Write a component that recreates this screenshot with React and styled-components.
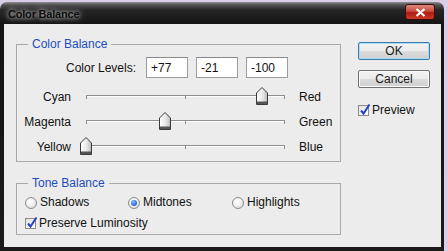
import React from "react";
import styled, { createGlobalStyle } from "styled-components";

const Global = createGlobalStyle`
  html, body { margin: 0; padding: 0; background: #dacde6; }
  body {
    width: 447px; height: 251px; overflow: hidden;
    font-family: "Liberation Sans", Arial, sans-serif;
    font-size: 12px; color: #111;
  }
  #root { padding-top: 2px; }
`;

const Window = styled.div`
  box-sizing: border-box;
  width: 444px;
  height: 249px;
  display: flex;
  flex-direction: column;
  padding: 0 3px 4px 4px;
  border-radius: 7px 7px 0 0;
  background: linear-gradient(to bottom, #8e8e8e 0px, #505050 3px, #262626 8px, #141414 22px, #1a1a1a 100%);
`;

const TitleBar = styled.div`
  height: 22px;
  display: flex;
  align-items: flex-start;
  justify-content: space-between;
  padding: 0 6px 0 4px;
`;

const Title = styled.div`
  margin-top: 6px;
  font-size: 11px;
  font-weight: bold;
  color: #0c0c0c;
  letter-spacing: -0.2px;
  text-shadow: 0 0 4px rgba(230, 230, 230, 0.9), 0 0 8px rgba(200, 200, 200, 0.6);
`;

const CloseButton = styled.div`
  margin-top: 2px;
  width: 30px;
  height: 16px;
  box-sizing: border-box;
  border: 1px solid #3a0a0a;
  border-radius: 3px;
  background: linear-gradient(to bottom, #e08a80 0%, #c84a3c 45%, #b01c10 55%, #c83a2a 100%);
  display: flex;
  align-items: center;
  justify-content: center;
`;

const Content = styled.div`
  flex: 1;
  background: #ececec;
  display: grid;
  grid-template-columns: 325px 72px;
  column-gap: 17px;
  align-items: start;
  padding: 18px 0 0 12px;
`;

const LeftColumn = styled.div`
  display: flex;
  flex-direction: column;
  gap: 21px;
  margin-top: 2px;
`;

const Group = styled.div`
  position: relative;
  border: 1px solid #a9a9a9;
  padding: ${(p) => p.$pad};
`;

const Legend = styled.span`
  position: absolute;
  top: -8px;
  left: 11px;
  padding: 0 4px;
  line-height: 14px;
  background: #ececec;
  color: #1d4cc0;
`;

const LevelsRow = styled.div`
  display: flex;
  align-items: center;
  height: 21px;
  margin-bottom: 7px;
`;

const LevelsLabel = styled.span`
  width: 119px;
  text-align: right;
  margin-right: 10px;
`;

const LevelBox = styled.input`
  box-sizing: border-box;
  width: 42px;
  height: 21px;
  margin-right: 8px;
  padding: 0 0 0 4px;
  border: 1px solid #9c9c9c;
  border-top-color: #8a8a8a;
  background: #fff;
  font: inherit;
  color: #111;
  outline: none;
`;

const SliderRow = styled.div`
  display: flex;
  align-items: flex-start;
  height: 25px;
  line-height: 25px;
`;

const SideLabel = styled.span`
  width: 54px;
  text-align: right;
`;

const Track = styled.div`
  position: relative;
  width: 199px;
  height: 25px;
  margin: 0 14px 0 15px;
  svg.line { display: block; }
`;

const Thumb = styled.svg`
  position: absolute;
  top: 2px;
  width: 12px;
  height: 18px;
`;

const RowsBlock = styled.div`
  display: flex;
  flex-direction: column;
`;

const RadioRow = styled.div`
  display: grid;
  grid-template-columns: 103px 104px auto;
  height: 13px;
  align-items: center;
  margin-bottom: 8px;
`;

const Option = styled.label`
  display: flex;
  align-items: center;
  gap: 3px;
  line-height: 13px;
`;

const RadioCircle = styled.span`
  box-sizing: border-box;
  width: 12px;
  height: 12px;
  border-radius: 50%;
  border: 1px solid #8b8b8b;
  background: radial-gradient(circle at 40% 35%, #ffffff 0%, #f0f0f0 45%, #cfcfcf 100%);
  display: flex;
  align-items: center;
  justify-content: center;
  &::after {
    content: "";
    display: ${(p) => (p.$on ? "block" : "none")};
    width: 6px;
    height: 6px;
    border-radius: 50%;
    background: radial-gradient(circle at 40% 35%, #8fc0ff 0%, #2d6fe0 60%, #1a4bb0 100%);
  }
`;

const CheckWrap = styled.span`
  position: relative;
  box-sizing: border-box;
  width: 11px;
  height: 11px;
  border: 1px solid #8b8b8b;
  background: linear-gradient(135deg, #e2e2e2, #ffffff);
  flex: none;
  svg { position: absolute; left: 0px; top: -3px; }
`;

const RightColumn = styled.div`
  display: flex;
  flex-direction: column;
  gap: 10px;
`;

const Button = styled.div`
  box-sizing: border-box;
  height: 18px;
  display: flex;
  align-items: center;
  justify-content: center;
  border: 1px solid ${(p) => (p.$default ? "#3d7bad" : "#707070")};
  border-radius: 2px;
  box-shadow: inset 0 0 0 1px ${(p) => (p.$default ? "#a8dcf4" : "#fbfbfb")};
  background: linear-gradient(to bottom, #f3f3f3 0%, #ebebeb 48%, #dcdcdc 52%, #cfcfcf 100%);
  color: #1a1a1a;
`;

const PreviewRow = styled.label`
  display: flex;
  align-items: center;
  gap: 3px;
  margin-top: 5px;
  line-height: 14px;
`;

const Check = () => (
  <CheckWrap>
    <svg width="13" height="13" viewBox="0 0 13 13">
      <path d="M2 7.5 L4.5 10.5 L10.5 1.5" fill="none" stroke="#2444c4" strokeWidth="2" strokeLinejoin="miter" />
    </svg>
  </CheckWrap>
);

const TrackLine = () => (
  <svg className="line" width="199" height="25" viewBox="0 0 199 25">
    <line x1="0" y1="10.5" x2="199" y2="10.5" stroke="#8f8f8f" />
    <line x1="0" y1="11.5" x2="199" y2="11.5" stroke="#ffffff" />
    <line x1="0.5" y1="10" x2="0.5" y2="14" stroke="#8f8f8f" />
    <line x1="99.5" y1="10" x2="99.5" y2="14" stroke="#8f8f8f" />
    <line x1="198.5" y1="10" x2="198.5" y2="14" stroke="#8f8f8f" />
  </svg>
);

const SliderThumb = ({ value }) => {
  const left = ((value + 100) / 200) * 199 - 6;
  return (
    <Thumb viewBox="0 0 12 18" style={{ left }}>
      <defs>
        <linearGradient id="tg" x1="0" y1="0" x2="1" y2="0">
          <stop offset="0" stopColor="#ffffff" />
          <stop offset="0.6" stopColor="#e6e6e6" />
          <stop offset="1" stopColor="#b8b8b8" />
        </linearGradient>
      </defs>
      <path d="M6 0.5 L11.5 6 L11.5 17.5 L0.5 17.5 L0.5 6 Z" fill="url(#tg)" stroke="#3a3a3a" />
      <rect x="1" y="14.5" width="10" height="2.5" fill="#555" />
    </Thumb>
  );
};

const sliders = [
  { left: "Cyan", right: "Red", value: 77 },
  { left: "Magenta", right: "Green", value: -21 },
  { left: "Yellow", right: "Blue", value: -100 },
];

export default function App() {
  return (
    <>
      <Global />
      <Window>
        <TitleBar>
          <Title>Color Balance</Title>
          <CloseButton>
            <svg width="11" height="9" viewBox="0 0 11 9">
              <path d="M1.5 1 L9.5 8 M9.5 1 L1.5 8" stroke="#fff" strokeWidth="2.2" />
            </svg>
          </CloseButton>
        </TitleBar>
        <Content>
          <LeftColumn>
            <Group $pad="12px 0 1px 0">
              <Legend>Color Balance</Legend>
              <LevelsRow>
                <LevelsLabel>Color Levels:</LevelsLabel>
                <LevelBox readOnly value="+77" />
                <LevelBox readOnly value="-21" />
                <LevelBox readOnly value="-100" />
              </LevelsRow>
              <RowsBlock>
                {sliders.map((s) => (
                  <SliderRow key={s.left}>
                    <SideLabel>{s.left}</SideLabel>
                    <Track>
                      <TrackLine />
                      <SliderThumb value={s.value} />
                    </Track>
                    <span>{s.right}</span>
                  </SliderRow>
                ))}
              </RowsBlock>
            </Group>
            <Group $pad="12px 0 4px 8px">
              <Legend>Tone Balance</Legend>
              <RadioRow>
                <Option><RadioCircle />Shadows</Option>
                <Option><RadioCircle $on />Midtones</Option>
                <Option><RadioCircle />Highlights</Option>
              </RadioRow>
              <Option><Check />Preserve Luminosity</Option>
            </Group>
          </LeftColumn>
          <RightColumn>
            <Button $default>OK</Button>
            <Button>Cancel</Button>
            <PreviewRow><Check />Preview</PreviewRow>
          </RightColumn>
        </Content>
      </Window>
    </>
  );
}
